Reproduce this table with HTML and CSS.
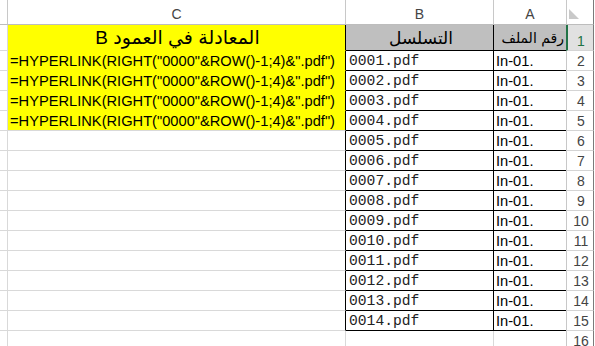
FILE: index.html
```html
<!DOCTYPE html>
<html lang="ar">
<head>
<meta charset="utf-8">
<title>Sheet</title>
<link rel="stylesheet" href="styles.css">
</head>
<body>
<div class="sheet">
  <!-- column headers -->
  <div class="cell hd"></div>
  <div class="cell hd">C</div>
  <div class="cell hd">B</div>
  <div class="cell hd hd-a">A</div>
  <div class="cell rh corner"><span class="tri"></span></div>

  <!-- row 1 -->
  <div class="cell d r1"></div>
  <div class="cell c r1 yel blk-r"><span class="title" dir="rtl">المعادلة في العمود B</span></div>
  <div class="cell b r1 gry blk-r blk-b"><span class="head-ar" dir="rtl">التسلسل</span></div>
  <div class="cell a r1 gry blk-b right"><span class="head-ar small" dir="rtl">رقم الملف</span></div>
  <div class="cell rh r1 sel">1</div>

  <!-- row 2 -->
  <div class="cell d"></div>
  <div class="cell c yel blk-r"><span class="formula">=HYPERLINK(RIGHT("0000"&amp;ROW()-1;4)&amp;".pdf")</span></div>
  <div class="cell b blk-r blk-b"><span class="mono">0001.pdf</span></div>
  <div class="cell a blk-b"><span class="txt">In-01.</span></div>
  <div class="cell rh">2</div>

  <!-- row 3 -->
  <div class="cell d"></div>
  <div class="cell c yel blk-r"><span class="formula">=HYPERLINK(RIGHT("0000"&amp;ROW()-1;4)&amp;".pdf")</span></div>
  <div class="cell b blk-r blk-b"><span class="mono">0002.pdf</span></div>
  <div class="cell a blk-b"><span class="txt">In-01.</span></div>
  <div class="cell rh">3</div>

  <!-- row 4 -->
  <div class="cell d"></div>
  <div class="cell c yel blk-r"><span class="formula">=HYPERLINK(RIGHT("0000"&amp;ROW()-1;4)&amp;".pdf")</span></div>
  <div class="cell b blk-r blk-b"><span class="mono">0003.pdf</span></div>
  <div class="cell a blk-b"><span class="txt">In-01.</span></div>
  <div class="cell rh">4</div>

  <!-- row 5 -->
  <div class="cell d"></div>
  <div class="cell c yel yel-last blk-r"><span class="formula">=HYPERLINK(RIGHT("0000"&amp;ROW()-1;4)&amp;".pdf")</span></div>
  <div class="cell b blk-r blk-b"><span class="mono">0004.pdf</span></div>
  <div class="cell a blk-b"><span class="txt">In-01.</span></div>
  <div class="cell rh">5</div>

  <!-- row 6 -->
  <div class="cell d"></div>
  <div class="cell c blk-r"></div>
  <div class="cell b blk-r blk-b"><span class="mono">0005.pdf</span></div>
  <div class="cell a blk-b"><span class="txt">In-01.</span></div>
  <div class="cell rh">6</div>

  <!-- row 7 -->
  <div class="cell d"></div>
  <div class="cell c blk-r"></div>
  <div class="cell b blk-r blk-b"><span class="mono">0006.pdf</span></div>
  <div class="cell a blk-b"><span class="txt">In-01.</span></div>
  <div class="cell rh">7</div>

  <!-- row 8 -->
  <div class="cell d"></div>
  <div class="cell c blk-r"></div>
  <div class="cell b blk-r blk-b"><span class="mono">0007.pdf</span></div>
  <div class="cell a blk-b"><span class="txt">In-01.</span></div>
  <div class="cell rh">8</div>

  <!-- row 9 -->
  <div class="cell d"></div>
  <div class="cell c blk-r"></div>
  <div class="cell b blk-r blk-b"><span class="mono">0008.pdf</span></div>
  <div class="cell a blk-b"><span class="txt">In-01.</span></div>
  <div class="cell rh">9</div>

  <!-- row 10 -->
  <div class="cell d"></div>
  <div class="cell c blk-r"></div>
  <div class="cell b blk-r blk-b"><span class="mono">0009.pdf</span></div>
  <div class="cell a blk-b"><span class="txt">In-01.</span></div>
  <div class="cell rh">10</div>

  <!-- row 11 -->
  <div class="cell d"></div>
  <div class="cell c blk-r"></div>
  <div class="cell b blk-r blk-b"><span class="mono">0010.pdf</span></div>
  <div class="cell a blk-b"><span class="txt">In-01.</span></div>
  <div class="cell rh">11</div>

  <!-- row 12 -->
  <div class="cell d"></div>
  <div class="cell c blk-r"></div>
  <div class="cell b blk-r blk-b"><span class="mono">0011.pdf</span></div>
  <div class="cell a blk-b"><span class="txt">In-01.</span></div>
  <div class="cell rh">12</div>

  <!-- row 13 -->
  <div class="cell d"></div>
  <div class="cell c blk-r"></div>
  <div class="cell b blk-r blk-b"><span class="mono">0012.pdf</span></div>
  <div class="cell a blk-b"><span class="txt">In-01.</span></div>
  <div class="cell rh">13</div>

  <!-- row 14 -->
  <div class="cell d"></div>
  <div class="cell c blk-r"></div>
  <div class="cell b blk-r blk-b"><span class="mono">0013.pdf</span></div>
  <div class="cell a blk-b"><span class="txt">In-01.</span></div>
  <div class="cell rh">14</div>

  <!-- row 15 -->
  <div class="cell d"></div>
  <div class="cell c blk-r"></div>
  <div class="cell b blk-r blk-b"><span class="mono">0014.pdf</span></div>
  <div class="cell a blk-b"><span class="txt">In-01.</span></div>
  <div class="cell rh">15</div>

  <!-- row 16 -->
  <div class="cell d"></div>
  <div class="cell c"></div>
  <div class="cell b"></div>
  <div class="cell a"></div>
  <div class="cell rh">16</div>
</div>
</body>
</html>
```

FILE: styles.css
```css
html, body {
  margin: 0;
  padding: 0;
  background: #ffffff;
  overflow: hidden;
}

.sheet {
  display: grid;
  grid-template-columns: 8px 338px 148px 72px 28px;
  grid-template-rows: 25px 26px repeat(15, 20px);
  width: 594px;
  font-family: "Liberation Sans", Arial, sans-serif;
  font-size: 14.67px;
  color: #000;
}

.cell {
  box-sizing: border-box;
  border-right: 1px solid #d9d9d9;
  border-bottom: 1px solid #d9d9d9;
  display: flex;
  align-items: flex-end;
  overflow: hidden;
  white-space: nowrap;
  line-height: 16px;
  padding-bottom: 1px;
}

/* header row */
.hd {
  border-right-color: #c8c8c8;
  border-bottom-color: #bdbdbd;
  justify-content: center;
  align-items: center;
  padding: 3px 0 0 0;
  font-size: 14px;
  color: #444;
}
.hd-a {
  border-right: none;
}

/* row headers */
.rh {
  border-left: 1px solid #c8c8c8;
  border-right: 1px solid #7a7a7a;
  border-bottom-color: #d4d4d4;
  justify-content: center;
  font-size: 14px;
  color: #444;
  padding-left: 2px;
}
.corner {
  border-bottom-color: #bdbdbd;
  justify-content: flex-start;
  align-items: flex-end;
  padding: 0 0 5px 2px;
}
.tri {
  width: 0;
  height: 0;
  border-bottom: 10px solid #c9c9c9;
  border-right: 10px solid transparent;
}
.sel {
  background: #e1e1e1;
  border-left: 2px solid #217346;
  color: #217346;
  padding-left: 1px;
}

/* column cells */
.a {
  border-right: none;
  padding-left: 2px;
}
.b {
  padding-left: 3px;
}
.c {
  padding-left: 2px;
}

.blk-r { border-right-color: #000; }
.blk-b { border-bottom-color: #000; }

.yel {
  background: #ffff00;
  border-bottom-color: #ffff00;
}
.yel-last {
  border-bottom-color: #d9d9d9;
}
.gry {
  background: #bfbfbf;
}

.r1 {
  padding-bottom: 1px;
}
.r1.c, .r1.b {
  justify-content: center;
}
.right {
  justify-content: flex-end;
  padding-right: 2px;
}

.title {
  font-family: "Liberation Sans", "DejaVu Sans", sans-serif;
  font-size: 19px;
  line-height: 22px;
}
.head-ar {
  font-family: "DejaVu Sans", serif;
  font-size: 17px;
  line-height: 22px;
}
.head-ar.small {
  font-size: 14px;
}

.formula {
  font-family: "Liberation Sans", Arial, sans-serif;
  font-size: 14.67px;
}
.mono {
  font-family: "Liberation Mono", "Courier New", monospace;
  font-size: 14.67px;
  color: #222;
}
.txt {
  font-family: "Liberation Sans", Arial, sans-serif;
  font-size: 14.67px;
}
```
